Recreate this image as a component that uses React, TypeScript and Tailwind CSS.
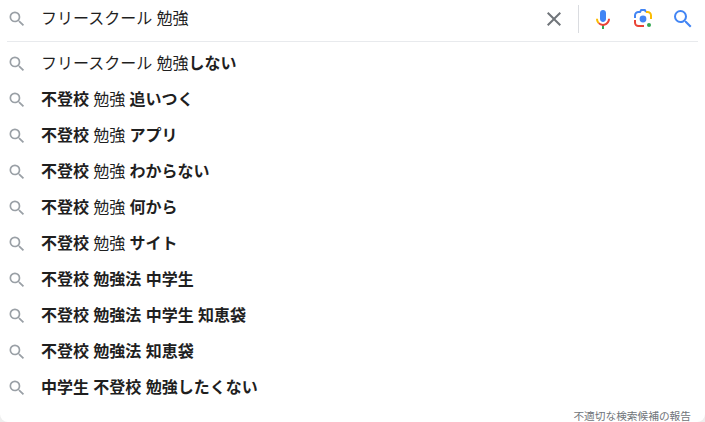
const rows: { text: string; bold: boolean }[][] = [
  [{ text: "フリースクール 勉強", bold: false }, { text: "しない", bold: true }],
  [{ text: "不登校", bold: true }, { text: " 勉強 ", bold: false }, { text: "追いつく", bold: true }],
  [{ text: "不登校", bold: true }, { text: " 勉強 ", bold: false }, { text: "アプリ", bold: true }],
  [{ text: "不登校", bold: true }, { text: " 勉強 ", bold: false }, { text: "わからない", bold: true }],
  [{ text: "不登校", bold: true }, { text: " 勉強 ", bold: false }, { text: "何から", bold: true }],
  [{ text: "不登校", bold: true }, { text: " 勉強 ", bold: false }, { text: "サイト", bold: true }],
  [{ text: "不登校 勉強法 中学生", bold: true }],
  [{ text: "不登校 勉強法 中学生 知恵袋", bold: true }],
  [{ text: "不登校 勉強法 知恵袋", bold: true }],
  [{ text: "中学生 不登校 勉強したくない", bold: true }],
];

function SearchIcon({ className }: { className: string }) {
  return (
    <svg viewBox="0 0 24 24" className={className} fill="currentColor">
      <path d="M15.5 14h-.79l-.28-.27A6.471 6.471 0 0 0 16 9.5 6.5 6.5 0 1 0 9.5 16c1.61 0 3.09-.59 4.23-1.57l.27.28v.79l5 4.99L20.49 19l-4.99-5zm-6 0C7.01 14 5 11.99 5 9.5S7.01 5 9.5 5 14 7.01 14 9.5 11.99 14 9.5 14z" />
    </svg>
  );
}

function MicIcon() {
  return (
    <svg viewBox="0 0 24 24" className="h-6 w-6">
      <path fill="#4285f4" d="M12 15c1.66 0 3-1.31 3-2.97V5.97C15 4.31 13.66 3 12 3S9 4.31 9 5.97v6.06C9 13.69 10.34 15 12 15z" />
      <path fill="#34a853" d="M11 18.08h2V22h-2z" />
      <path fill="#fbbc04" d="M7.05 16.87c-1.27-1.33-2.05-3.1-2.05-5.03h2c0 1.44.58 2.75 1.53 3.65l-1.48 1.38z" />
      <path fill="#ea4335" d="M12 16.93c-1.3 0-2.5-.49-3.47-1.44l-1.48 1.38A7 7 0 0 0 12 19c3.87 0 7-3.09 7-7.16h-2c0 2.79-2.24 5.09-5 5.09z" />
    </svg>
  );
}

function LensIcon() {
  return (
    <svg viewBox="0 0 24 24" className="h-6 w-6" fill="none">
      <path stroke="#4285f4" strokeWidth="2" d="M4 11V8.5A3.5 3.5 0 0 1 7.5 5H9l1.2-2h3.6L15 5" />
      <path stroke="#fbbc04" strokeWidth="2" d="M15 5h1.5A3.5 3.5 0 0 1 20 8.5V12" />
      <path stroke="#ea4335" strokeWidth="2" d="M4 13v2.5A3.5 3.5 0 0 0 7.5 19H13" />
      <circle cx="12" cy="12" r="3.4" fill="#4285f4" />
      <circle cx="18" cy="18" r="2" fill="#34a853" />
    </svg>
  );
}

export default function App() {
  return (
    <div className="h-[422px] w-[705px] bg-[#eeeeee]">
      <div className="flex h-full flex-col overflow-hidden rounded-b-[8px] bg-white font-['Noto_Sans_CJK_JP',sans-serif] text-[#1f1f1f] [word-spacing:0.7px]">
        <div className="mx-[7px] flex h-[42px] shrink-0 items-center border-b border-[#e8eaed] pb-[3px]">
          <SearchIcon className="h-5 w-5 text-[#9aa0a6]" />
          <div className="ml-[14px] flex-1 pb-[4px] text-base leading-[32px]">フリースクール 勉強</div>
          <svg viewBox="0 0 24 24" className="mr-[12px] h-6 w-6 text-[#70757a]" fill="currentColor">
            <path d="M19 6.41 17.59 5 12 10.59 6.41 5 5 6.41 10.59 12 5 17.59 6.41 19 12 13.41 17.59 19 19 17.59 13.41 12z" />
          </svg>
          <div className="mr-[12px] h-[28px] w-px bg-[#dadce0]" />
          <MicIcon />
          <div className="w-[16px]" />
          <LensIcon />
          <div className="w-[16px]" />
          <SearchIcon className="mr-[3px] h-6 w-6 text-[#4285f4]" />
        </div>
        <ul className="mt-[3px] flex flex-col">
          {rows.map((row, i) => (
            <li key={i} className="flex h-9 items-center pl-[7px]">
              <SearchIcon className="mt-[2px] h-5 w-5 text-[#9aa0a6]" />
              <span className="ml-[14px] whitespace-pre pb-[2px] text-base leading-[32px]">
                {row.map((part, j) => (
                  <span key={j} className={part.bold ? "font-bold" : "font-normal"}>
                    {part.text}
                  </span>
                ))}
              </span>
            </li>
          ))}
        </ul>
        <div className="flex flex-1 items-end justify-end pr-[14px] text-[10.7px] leading-[12px] text-[#70757a] [word-spacing:0]">
          不適切な検索候補の報告
        </div>
      </div>
    </div>
  );
}
